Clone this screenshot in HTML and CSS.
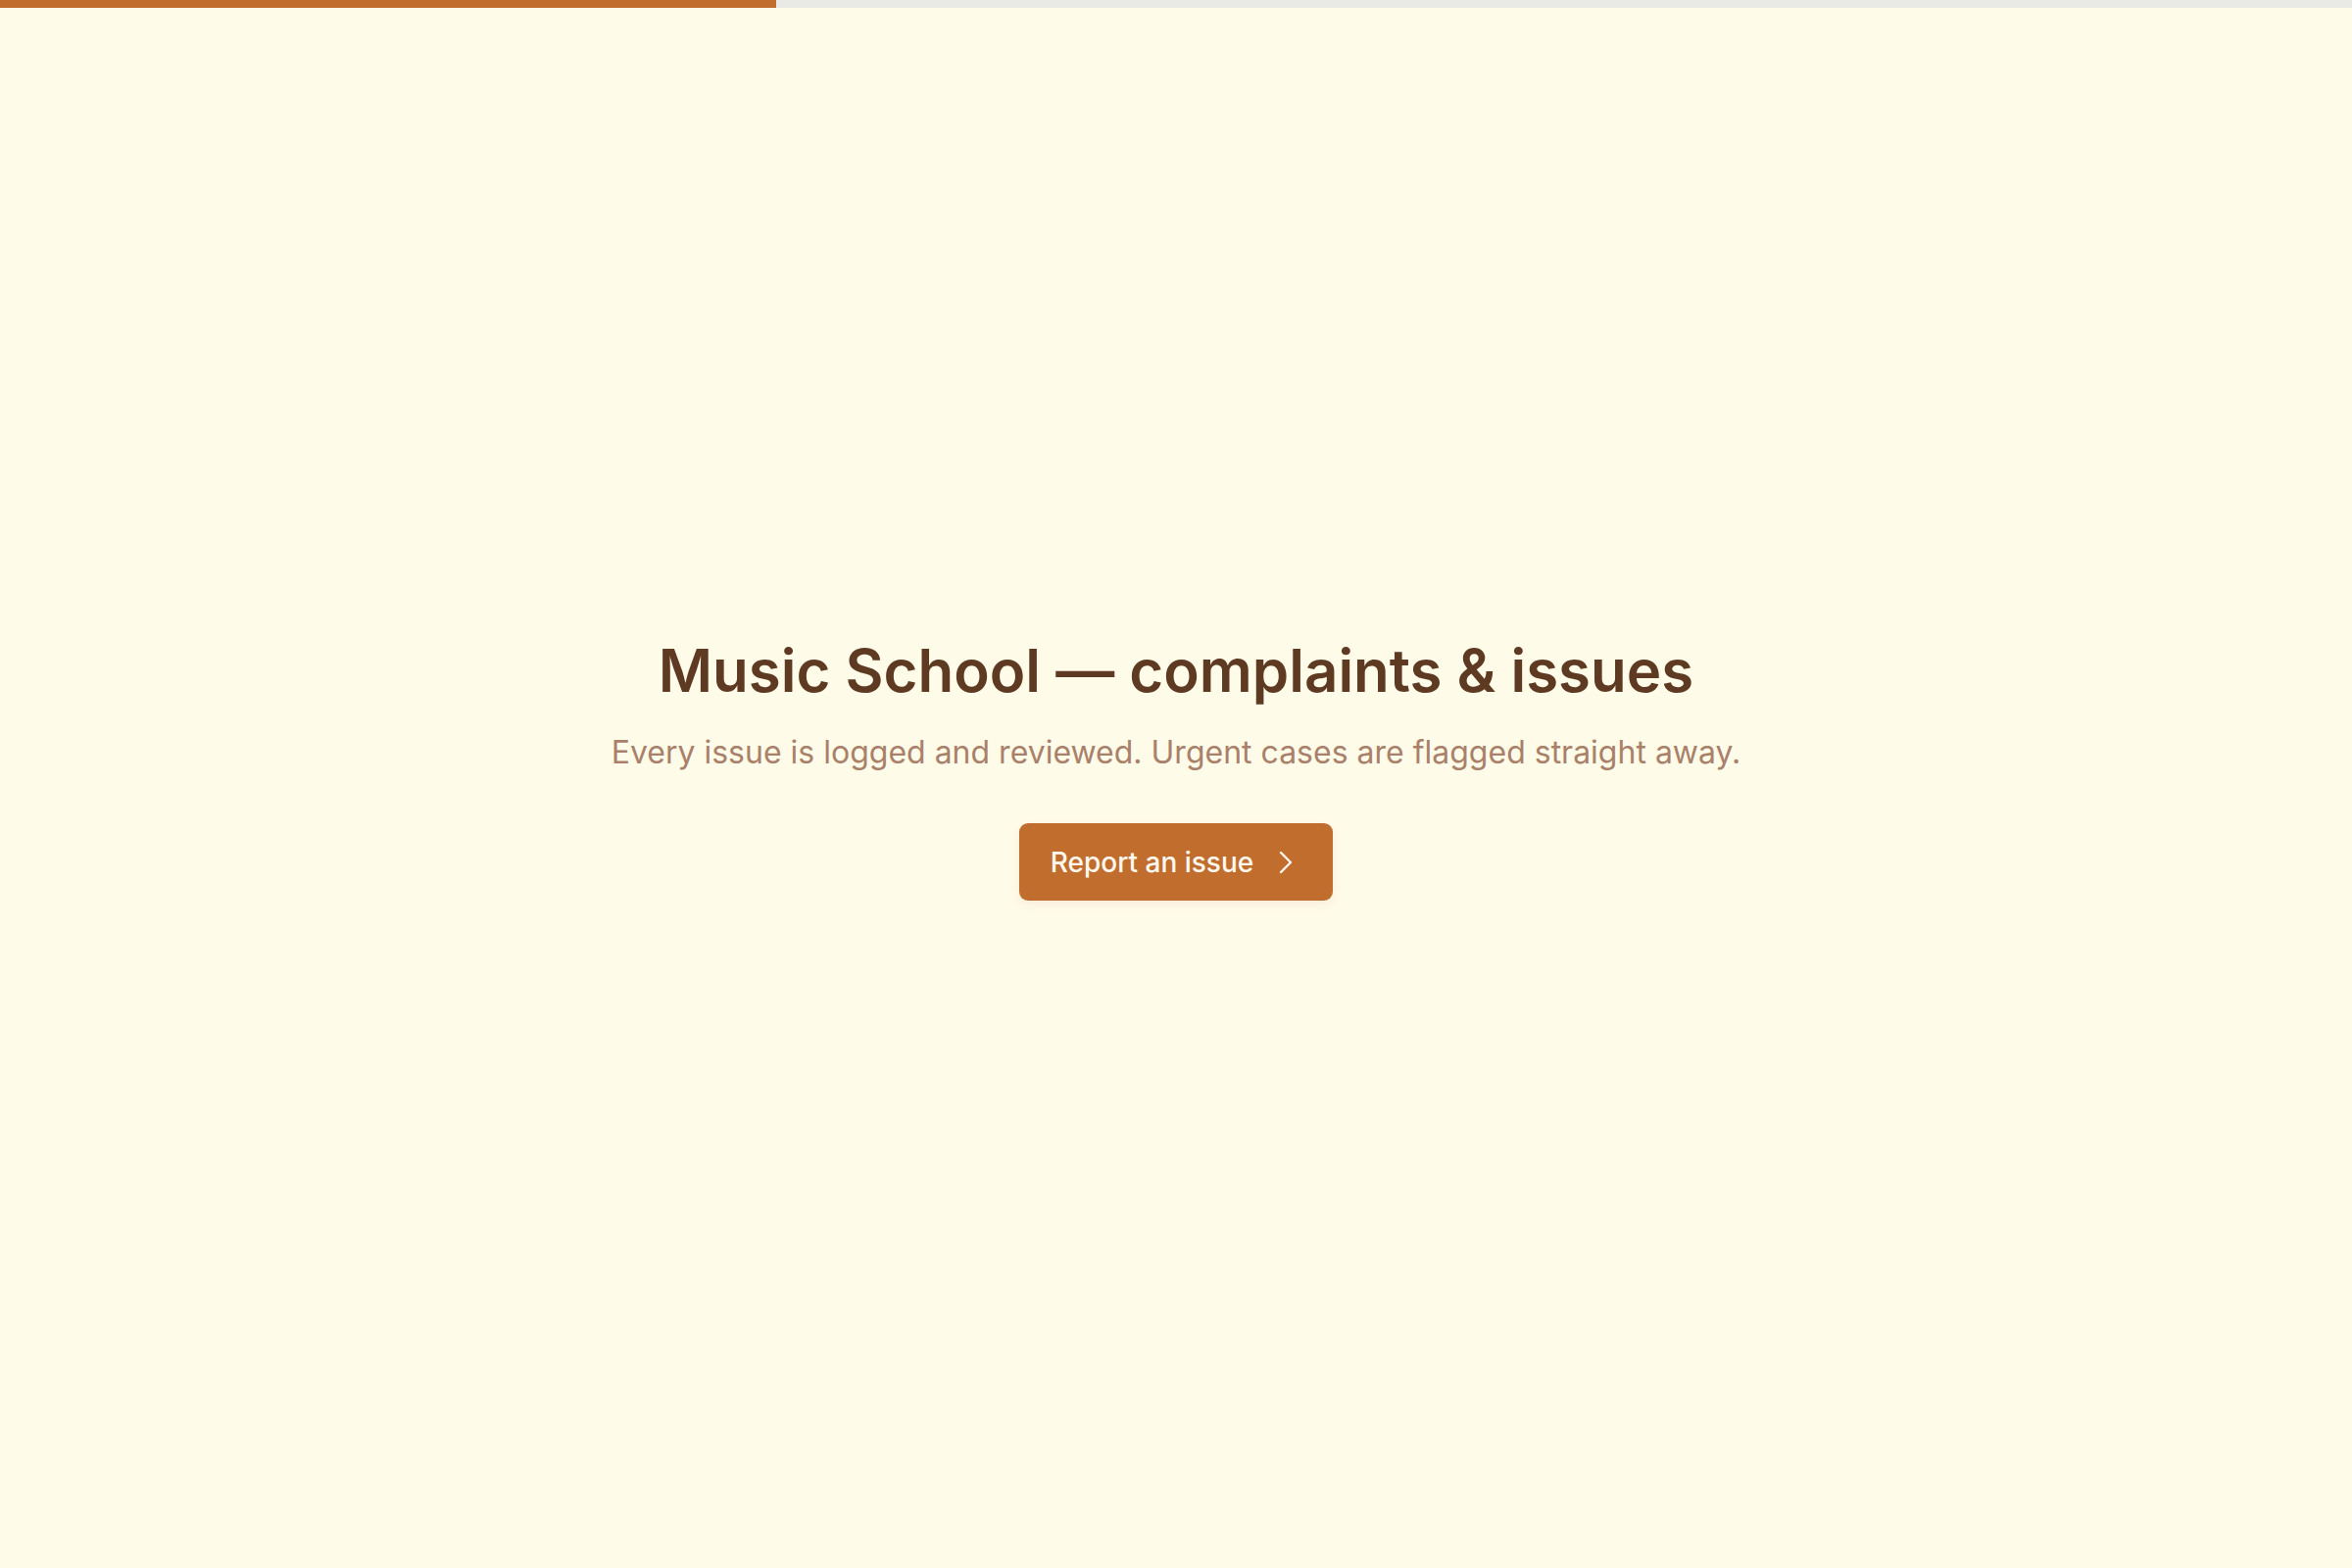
FILE: index.html
```html
<!DOCTYPE html>
<html lang="en">
<head>
<meta charset="utf-8">
<title>Music School — complaints &amp; issues</title>
<link rel="stylesheet" href="styles.css">
</head>
<body>
<div class="progress"><div class="progress-fill" style="width:33%"></div></div>
<main class="hero">
  <section class="card">
    <h1 class="title">Music School — complaints &amp; issues</h1>
    <p class="subtitle">Every issue is logged and reviewed. Urgent cases are flagged straight away.</p>
    <button class="cta" type="button">
      <span>Report an issue</span>
      <svg class="chev" viewBox="0 0 14 24" width="14" height="24" fill="none" stroke="currentColor" stroke-width="2.4" stroke-linecap="round" stroke-linejoin="round"><path d="M2 2l10 10-10 10"/></svg>
    </button>
  </section>
</main>
</body>
</html>
```

FILE: styles.css
```css
* { box-sizing: border-box; }
html, body { margin: 0; padding: 0; }
body {
  background: #fffbe9;
  font-family: Inter, "Noto Sans", sans-serif;
  min-height: 100vh;
  display: flex;
  flex-direction: column;
}
.progress {
  height: 8px;
  background: #e9e9e5;
  flex: none;
}
.progress-fill {
  height: 100%;
  background: #c06d2e;
}
.hero {
  flex: 1;
  display: flex;
  align-items: center;
  justify-content: center;
  padding-bottom: 41px;
}
.card {
  display: flex;
  flex-direction: column;
  align-items: center;
  padding: 0 32px;
}
.title {
  margin: 0;
  font-size: 60px;
  font-weight: 600;
  color: #5e3a23;
  line-height: 72px;
}
.subtitle {
  margin: 25px 0 0;
  font-size: 32px;
  color: #a9816a;
  line-height: 45px;
}
.cta {
  margin-top: 50px;
  display: flex;
  align-items: center;
  gap: 26px;
  height: 79px;
  padding: 0 41px 0 32px;
  border: none;
  border-radius: 9px;
  background: #c06d2e;
  color: #fff8ee;
  font-family: inherit;
  font-size: 28px;
  font-weight: 500;
  box-shadow: 0 4px 10px rgba(160, 90, 30, 0.08);
}
.chev { width: 14px; height: 24px; flex: none; }
```
